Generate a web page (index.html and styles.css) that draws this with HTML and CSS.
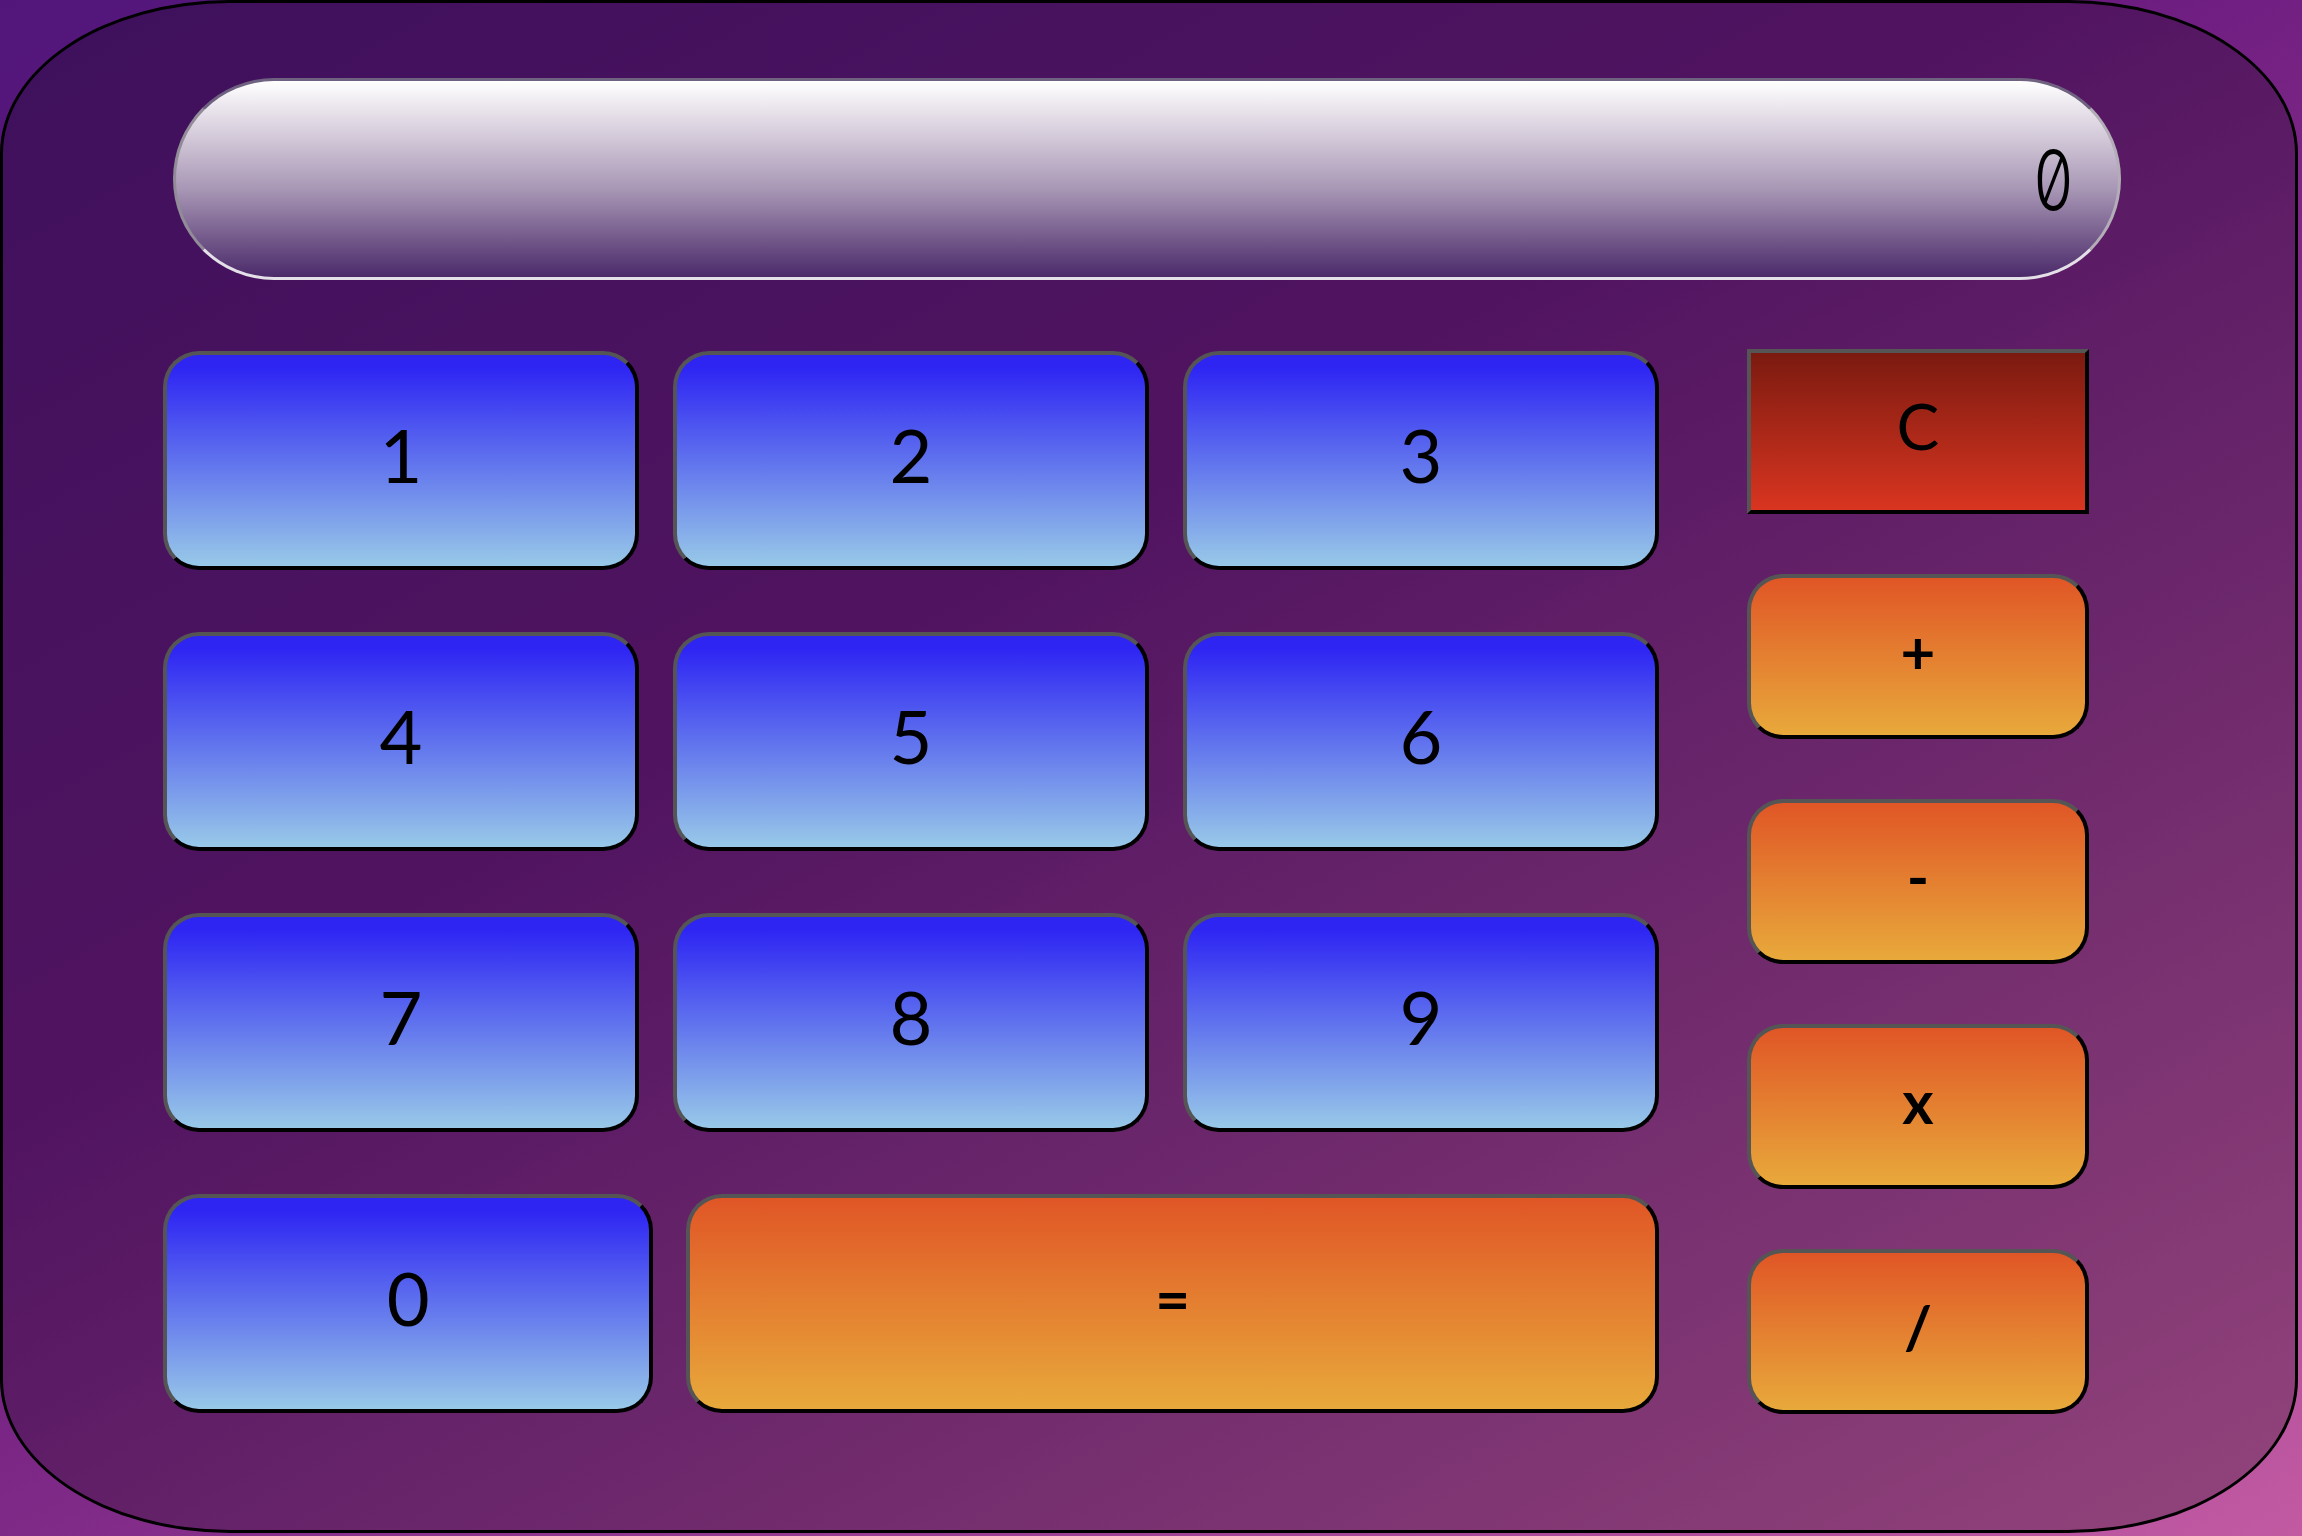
FILE: index.html
```html
<!DOCTYPE html>
<html lang="en">
<head>
<meta charset="utf-8">
<title>Calculator</title>
<link rel="stylesheet" href="styles.css">
</head>
<body>
<div class="calculator">
  <div class="display"><span class="display-value">0</span></div>
  <div class="keypad">
    <div class="numbers">
      <button class="key num">1</button>
      <button class="key num">2</button>
      <button class="key num">3</button>
      <button class="key num">4</button>
      <button class="key num">5</button>
      <button class="key num">6</button>
      <button class="key num">7</button>
      <button class="key num">8</button>
      <button class="key num">9</button>
      <div class="bottom-row">
        <button class="key num zero">0</button>
        <button class="key op equals">=</button>
      </div>
    </div>
    <div class="operators">
      <button class="key clear">C</button>
      <button class="key op">+</button>
      <button class="key op">-</button>
      <button class="key op">x</button>
      <button class="key op">/</button>
    </div>
  </div>
</div>
</body>
</html>
```
FILE: styles.css
```css
html, body {
  margin: 0;
  height: 100%;
}

body {
  overflow: hidden;
  background: linear-gradient(151deg, #52167a 0%, #6a1a7f 40%, #c25aa2 100%);
  font-family: Lato, "Open Sans", sans-serif;
}

.calculator {
  box-sizing: border-box;
  width: 2298px;
  height: 1533px;
  border: 3px solid #000;
  border-radius: 10%;
  background: rgba(0, 0, 0, 0.24);
  padding: 75px 0 0 160px;
  display: flex;
  flex-direction: column;
}

.display {
  box-sizing: border-box;
  margin-left: 10px;
  width: 1948px;
  height: 202px;
  border-radius: 101px;
  border: 3px solid;
  border-color: #6f6280 #b3adb8 #e4e0e8 #928c98;
  background: linear-gradient(#ffffff 0%, #d9d0de 25%, #a897b5 55%, #4b2a6a 100%);
  display: flex;
  align-items: center;
  justify-content: flex-end;
  padding: 4px 44px 0 0;
}

.display-value {
  display: inline-block;
  font-family: Inter, "DejaVu Sans", sans-serif;
  font-feature-settings: "zero" 1, "tnum" 1;
  font-weight: 300;
  font-size: 82px;
  line-height: 1;
  color: #000;
  transform: scaleX(0.78);
  transform-origin: right center;
}

.keypad {
  margin-top: 69px;
  display: flex;
  align-items: flex-start;
  gap: 88px;
}

.numbers {
  margin-top: 2px;
  display: grid;
  grid-template-columns: repeat(3, 476px);
  grid-auto-rows: 219px;
  column-gap: 34px;
  row-gap: 62px;
}

.bottom-row {
  grid-column: 1 / -1;
  display: flex;
  gap: 33px;
}

.bottom-row .zero {
  flex: 1;
}

.bottom-row .equals {
  flex: 2;
}

.operators {
  width: 342px;
  display: flex;
  flex-direction: column;
  gap: 60px;
}

.operators .key {
  height: 165px;
}

.key {
  box-sizing: border-box;
  margin: 0;
  border: 4px solid;
  border-color: #555555 #000000 #000000 #555555;
  border-radius: 36px;
  color: #000;
  font-family: Lato, "Open Sans", sans-serif;
  font-weight: 400;
  line-height: 1;
  display: flex;
  align-items: center;
  justify-content: center;
  padding: 0 0 12px;
}

.num {
  font-size: 74px;
  background: linear-gradient(#2e25f3 6%, #98c9e8 100%);
}

.op {
  font-size: 60px;
  font-weight: 700;
  background: linear-gradient(#e05626 0%, #e8a93b 100%);
}

.clear {
  border-radius: 0;
  font-size: 64px;
  background: linear-gradient(#7b1a10 0%, #d93520 100%);
}
```
